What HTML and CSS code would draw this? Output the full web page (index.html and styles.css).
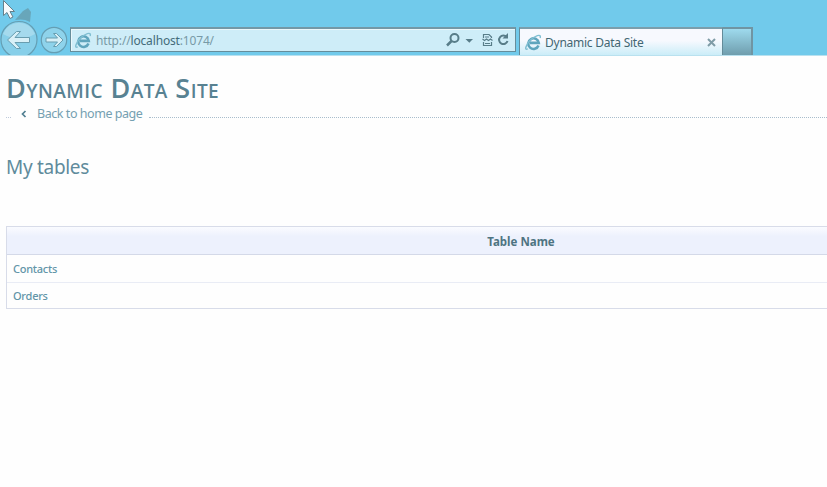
FILE: index.html
```html
<!DOCTYPE html>
<html lang="en">
<head>
<meta charset="utf-8">
<title>Dynamic Data Site</title>
<link rel="stylesheet" href="styles.css">
</head>
<body>
<svg class="defs" width="0" height="0">
  <symbol id="ie" viewBox="0 0 18 18">
    <path d="M14.3 12.2A5.6 5.6 0 1 1 14.6 9.4H5.2" fill="none" stroke="#5fa5bd" stroke-width="2.7"/>
    <path d="M3 15.6C-1 18.2.7 11.6 5.2 7 10 2 17.8-1.2 16 4.3" fill="none" stroke="#80bfd2" stroke-width="1.5"/>
  </symbol>
</svg>
<header class="browser">
  <nav class="nav">
    <svg class="back" width="40" height="37" viewBox="0 0 40 37">
      <circle cx="19" cy="19.5" r="18" fill="#87cfe9" stroke="#659eb3" stroke-width="1.2"/>
      <path d="M3 14a17 17 0 0 1 32 0Q19 23 3 14" fill="#b5e0ef" opacity=".65"/>
      <path d="M7.500 20l9-8.500h4l-5.500 6h14.500v5H15l5.500 6h-4z" fill="#d8f0f7" stroke="#689daf"/>
    </svg>
    <svg class="forward" width="28" height="28" viewBox="0 0 28 28">
      <circle cx="14" cy="14" r="12.700" fill="#8ed3eb" stroke="#659eb3" stroke-width="1.2"/>
      <path d="M23 14l-6.500-6.500h-3l4 4.500H6v4h11.500l-4 4.500h3z" fill="#d8f0f7" stroke="#689daf"/>
    </svg>
  </nav>
  <div class="address">
    <svg class="ie" width="17" height="17"><use href="#ie"/></svg>
    <span class="url">http://<b>localhost</b>:1074/</span>
    <svg class="tools" width="66" height="18" viewBox="0 0 66 18" fill="none" stroke="#587d89">
      <circle cx="9.500" cy="7" r="4" stroke-width="2"/><path d="M6.500 10L2 14.500" stroke-width="2.500"/>
      <path d="M20.500 8h7.500l-3.700 3.700z" fill="#587d89" stroke="none"/>
      <path stroke-width="1.200" d="M38.500 7V3.500h5.500l2.500 2.500v1M38.500 11v3.500h8V11M37.500 8l2 1.500 2-1.500 2 1.500 2-1.500 2 1.500M40 6h4M40 12.500h5"/>
      <path d="M61.700 6A4.300 4.300 0 1 0 62.500 10" stroke-width="2"/><path d="M63 2v5.500h-5.500z" fill="#587d89" stroke="none"/>
    </svg>
  </div>
  <div class="tab">
    <svg class="ie" width="17" height="17"><use href="#ie"/></svg>
    <span class="tab-title">Dynamic Data Site</span>
    <svg class="close" width="9" height="9" viewBox="0 0 9 9"><path d="M1 1l7 7M8 1L1 8" stroke="#7f9ca7" stroke-width="2"/></svg>
  </div>
  <div class="new-tab"></div>
  <svg class="pointer" width="34" height="24" viewBox="0 0 34 24">
    <path d="M15 20l8-9 5-3 3 4-1 10c-5-3-10-3-15-2" fill="#6699aa" opacity=".75"/>
    <path d="M3.500.5v15l3.500-3 3 6 3-1.500-3-5.500h4.500z" fill="#f8fbfd" stroke="#66808b"/>
  </svg>
</header>
<main>
  <h1>Dynamic Data Site</h1>
  <div class="crumb">
    <span class="stub"></span>
    <svg class="chevron" width="6" height="8" viewBox="0 0 6 8"><path d="M4.500 1L1.500 4l3 3" fill="none" stroke="#517f91" stroke-width="1.700"/></svg>
    <a class="home">Back to home page</a>
    <span class="rule"></span>
  </div>
  <h2>My tables</h2>
  <table>
    <thead><tr><th>Table Name</th></tr></thead>
    <tbody>
      <tr><td><a>Contacts</a></td></tr>
      <tr><td><a>Orders</a></td></tr>
    </tbody>
  </table>
</main>
</body>
</html>
```
FILE: styles.css
```css
* { box-sizing: border-box; }
body { margin: 0; height: 487px; overflow: hidden; background: #fefefe; font-family: "Noto Sans", "Open Sans", sans-serif; }
svg { display: block; flex: none; }
.defs { position: absolute; }
.browser { position: relative; display: flex; align-items: flex-start; height: 56px; padding-top: 27px; background: #71caeb; border-bottom: 1px solid #b9e1ef; overflow: hidden; }
.nav { display: flex; flex: none; width: 70px; margin-top: -7px; }
.forward { margin-top: 6px; }
.address { display: flex; align-items: center; width: 446px; height: 25px; padding: 0 4px; background: #ceedf8; border: 1px solid #668d9b; border-top: 2px solid #7498a6; box-shadow: inset 1px 1px #eaf8fc; }
.url { margin-left: 4px; font-size: 12px; letter-spacing: -.16px; color: #789aa6; white-space: nowrap; }
.url b { font-weight: 400; color: #446c7a; }
.tools { margin-left: auto; }
.tab { display: flex; align-items: center; width: 204px; height: 28px; margin-left: 3px; padding: 1px 6px 0 5px; background: linear-gradient(#f7f9fe 45%, #cbedf8); border: 1px solid #648b99; border-top: 2px solid #7b9eac; border-bottom: 0; }
.tab-title { margin-left: 3px; font-size: 12px; letter-spacing: -.25px; color: #426773; white-space: nowrap; }
.close { margin-left: auto; }
.new-tab { width: 30px; height: 28px; background: linear-gradient(#9edaed, #6f9dad); border: 2px solid #7095a3; border-left: 0; border-bottom: 0; }
.pointer { position: absolute; left: 0; top: 0; }
main { padding: 16px 0 0 6px; overflow: hidden; }
h1 { height: 32px; margin: 0; font: 600 27px/32px "Open Sans", sans-serif; font-variant: small-caps; letter-spacing: .45px; color: #588292; white-space: nowrap; }
.crumb { display: flex; align-items: center; height: 18px; margin-top: 1px; }
.stub { width: 5px; margin-top: 6px; border-top: 1px dotted #bdc9da; }
.chevron { margin-left: 10px; }
.home { margin: -1px 0 0 10px; font-size: 12.500px; letter-spacing: -.45px; color: #75a0b1; white-space: nowrap; }
.rule { flex: 1; margin: 6px 0 0 7px; border-top: 1px dotted #a9bdcc; }
h2 { height: 30px; margin: 29px 0 44px; font-size: 19px; line-height: 30px; letter-spacing: -.3px; font-weight: 400; color: #608b9c; }
table { width: 1030px; border: 1px solid #d8dce9; border-collapse: separate; border-spacing: 0; font-size: 11px; line-height: 16px; }
th { height: 28px; padding: 2px 0 0; background: linear-gradient(#fafbff, #edf1fd 35%, #edf1fd); border-bottom: 1px solid #d4d9e8; font-size: 11.500px; color: #4e7482; font-weight: 700; }
td { height: 28px; padding: 0 6px; letter-spacing: -.25px; color: #6295a8; font-weight: 500; }
tbody tr:first-child td { border-bottom: 1px solid #e9ecf5; }
tbody tr:last-child td { height: 25px; padding-top: 1px; }
```
